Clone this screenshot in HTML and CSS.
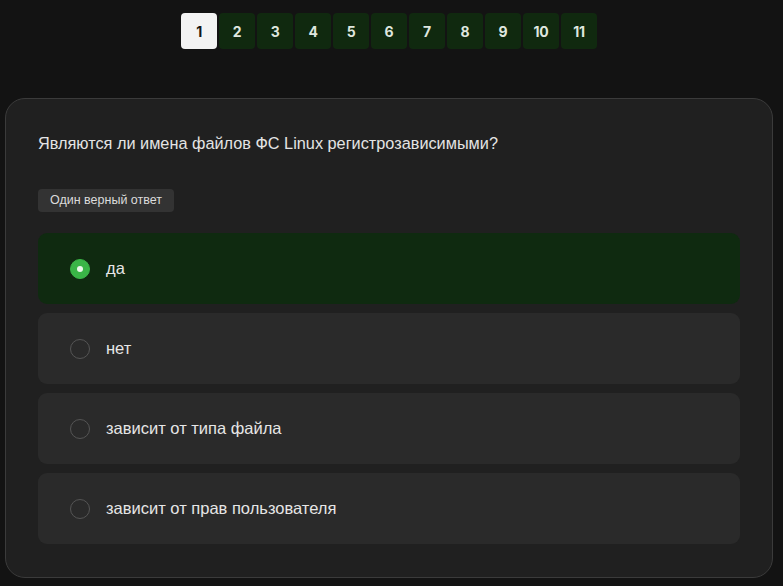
FILE: index.html
```html
<!DOCTYPE html>
<html lang="ru">
<head>
<meta charset="utf-8">
<title>Тест</title>
<link rel="stylesheet" href="styles.css">
</head>
<body>
<div class="page">
  <nav class="pager">
    <button class="pg active">1</button>
    <button class="pg">2</button>
    <button class="pg">3</button>
    <button class="pg">4</button>
    <button class="pg">5</button>
    <button class="pg">6</button>
    <button class="pg">7</button>
    <button class="pg">8</button>
    <button class="pg">9</button>
    <button class="pg">10</button>
    <button class="pg">11</button>
  </nav>
  <section class="card">
    <h2 class="question">Являются ли имена файлов ФС Linux регистрозависимыми?</h2>
    <span class="badge">Один верный ответ</span>
    <div class="options">
      <div class="option selected"><span class="radio"></span><span class="label">да</span></div>
      <div class="option"><span class="radio"></span><span class="label">нет</span></div>
      <div class="option"><span class="radio"></span><span class="label">зависит от типа файла</span></div>
      <div class="option"><span class="radio"></span><span class="label">зависит от прав пользователя</span></div>
    </div>
  </section>
</div>
</body>
</html>
```
FILE: styles.css
```css
html, body {
  margin: 0;
  padding: 0;
  background: #131313;
  height: 100%;
}
body {
  font-family: "Liberation Sans", Arial, sans-serif;
  color: #e2e2e2;
}
.page {
  width: 778px;
  padding-top: 13px;
}
.pager {
  display: flex;
  justify-content: center;
  gap: 2px;
}
.pg {
  width: 36px;
  height: 36px;
  border: none;
  border-radius: 4px;
  background: #10290f;
  color: #dfe6df;
  font-family: Inter, "Noto Sans", sans-serif;
  font-weight: 700;
  font-size: 14px;
  padding: 0;
  letter-spacing: -0.3px;
}
.pg.active {
  background: #f3f3f3;
  color: #151515;
}
.card {
  margin: 49px 0 0 5px;
  width: 768px;
  box-sizing: border-box;
  background: #202020;
  border: 1px solid #3b3b3b;
  border-radius: 20px;
  padding: 35px 32px 33px;
}
.question {
  margin: 0;
  font-size: 16.3px;
  font-weight: 400;
  line-height: 18px;
  color: #e4e4e4;
}
.badge {
  display: inline-block;
  margin-top: 37px;
  background: #333333;
  border-radius: 4px;
  font-size: 12.5px;
  line-height: 23px;
  padding: 0 12px;
  color: #dcdcdc;
}
.options {
  margin-top: 21px;
  display: flex;
  flex-direction: column;
  gap: 9px;
}
.option {
  height: 71px;
  background: #2a2a2a;
  border-radius: 9px;
  display: flex;
  align-items: center;
  padding-left: 32px;
  gap: 16px;
}
.option.selected {
  background: #0f2a10;
}
.radio {
  width: 18px;
  height: 18px;
  border-radius: 50%;
  border: 1px solid #555;
  box-sizing: content-box;
  position: relative;
}
.selected .radio {
  background: #3ab547;
  border-color: #3ab547;
}
.selected .radio::after {
  content: "";
  position: absolute;
  left: 6px;
  top: 6px;
  width: 6px;
  height: 6px;
  border-radius: 50%;
  background: #eaf7ea;
}
.label {
  font-size: 16.5px;
  color: #e6e6e6;
}
```
